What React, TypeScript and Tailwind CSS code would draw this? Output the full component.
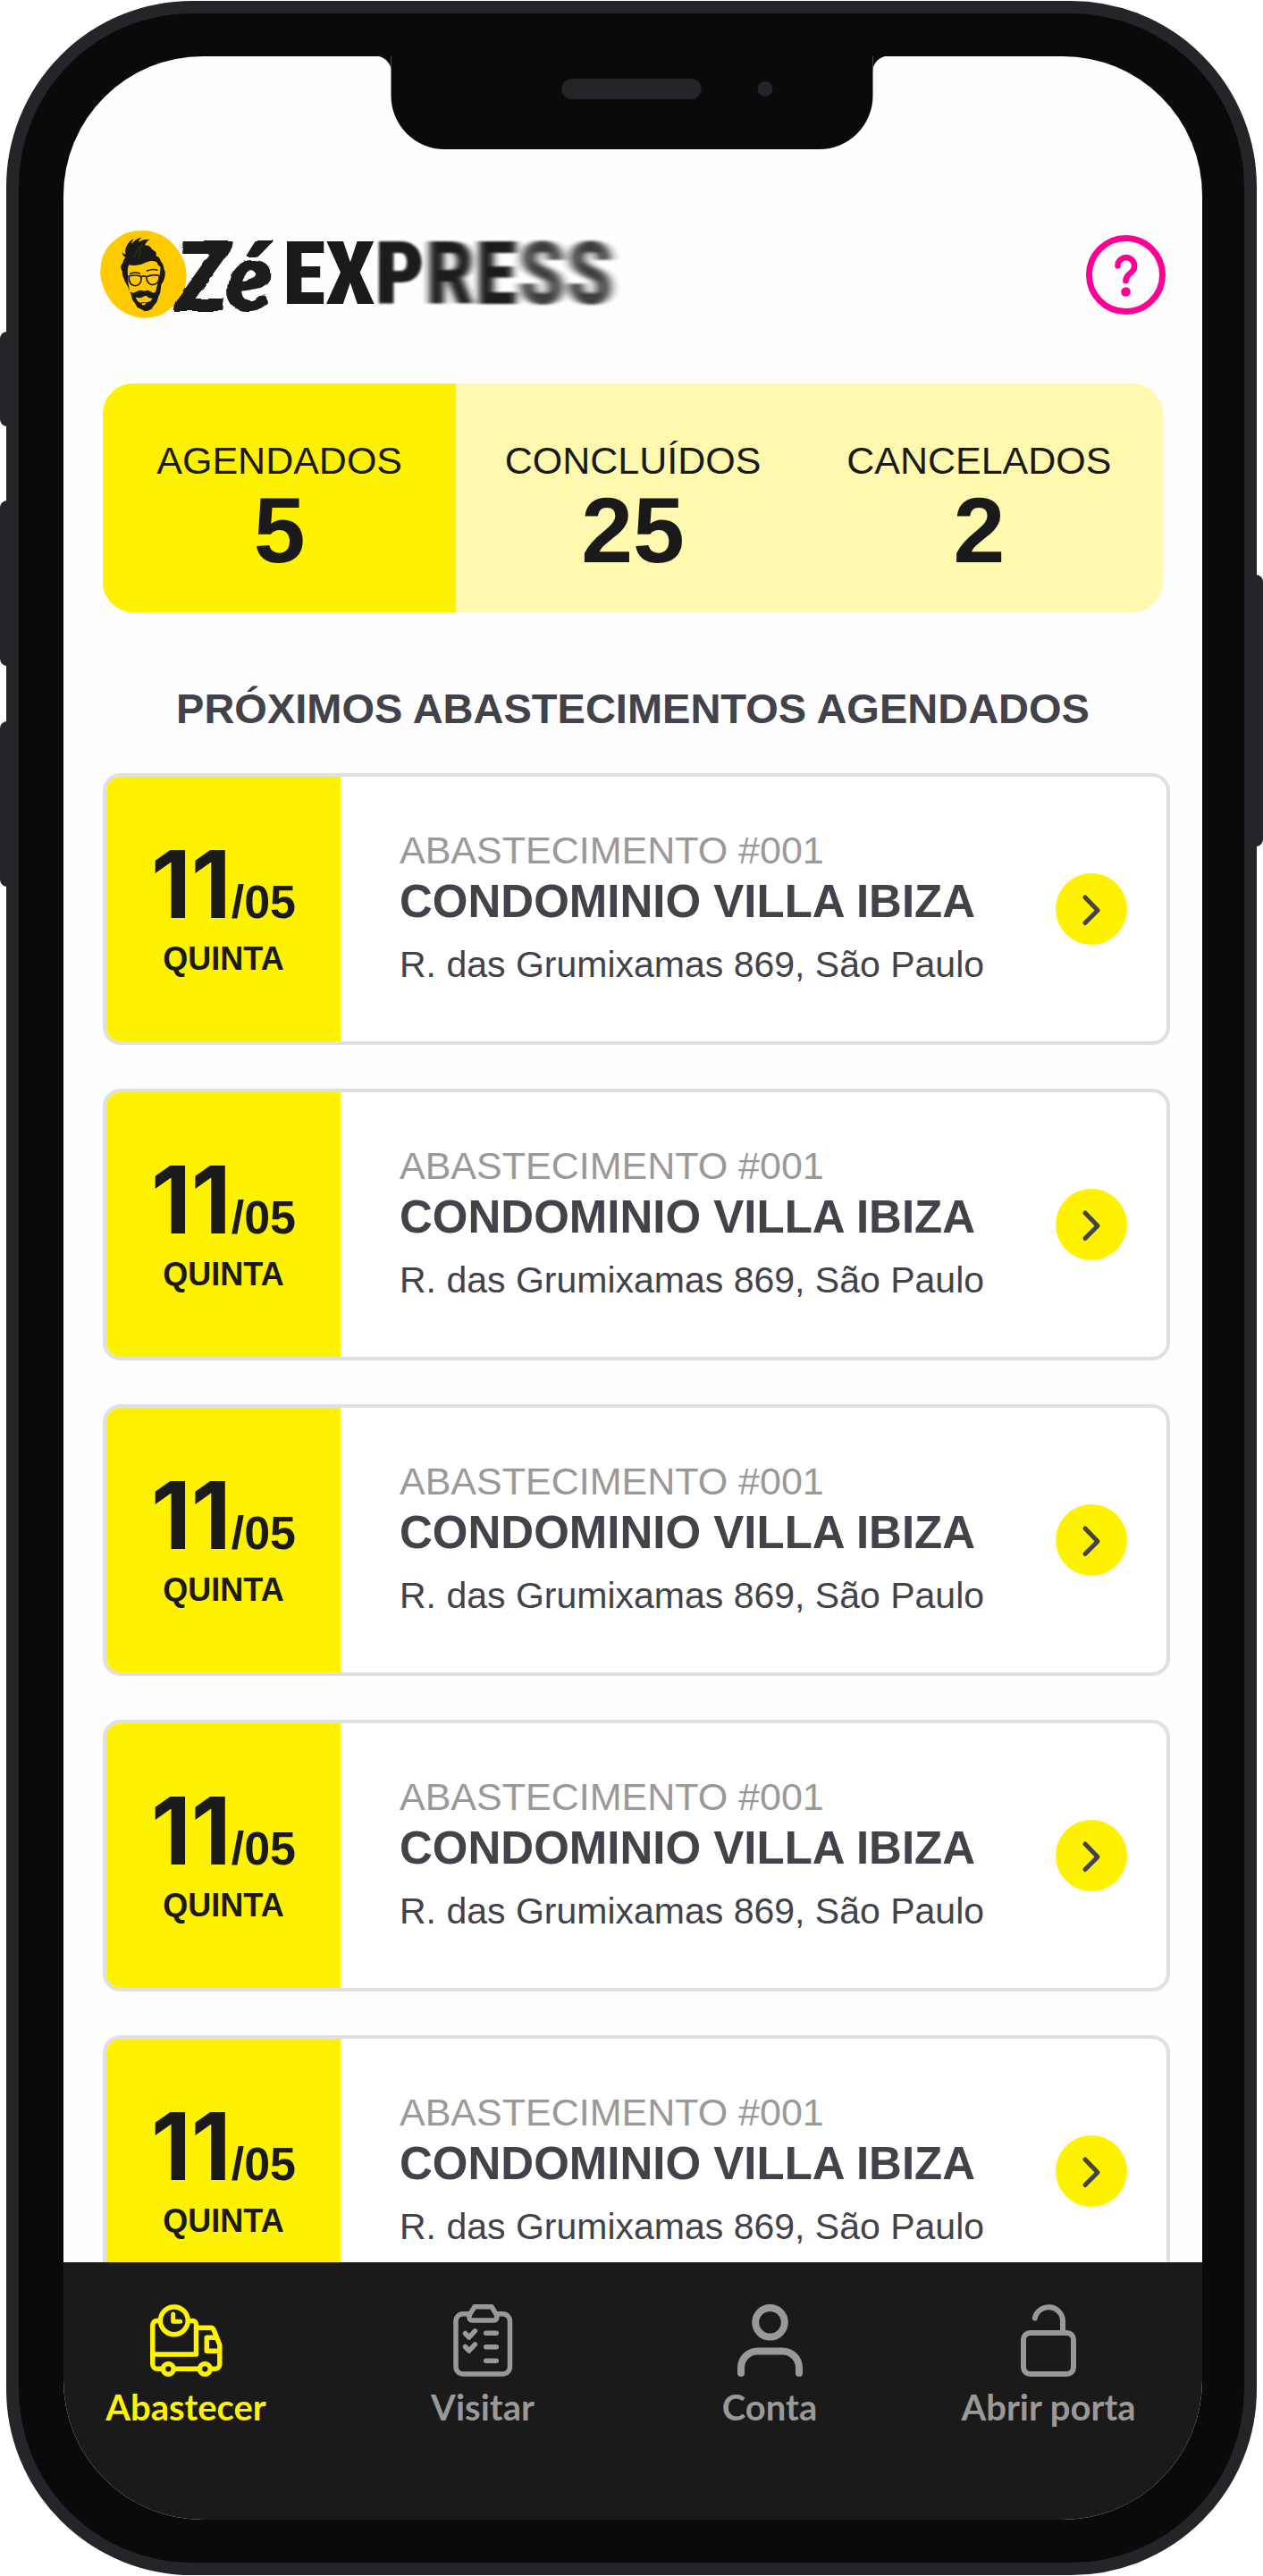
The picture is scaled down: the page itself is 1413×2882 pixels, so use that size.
import type { ReactNode } from "react";

const sans = "font-['Liberation_Sans',Arial,sans-serif]";

function MotionFilters() {
  return (
    <svg width="0" height="0" className="absolute" aria-hidden="true">
      <defs>
        <filter id="motion-1" x="-20%" width="140%" y="-10%" height="120%">
          <feGaussianBlur stdDeviation="1.6 1" />
        </filter>
        <filter id="motion-2" x="-20%" width="140%" y="-10%" height="120%">
          <feGaussianBlur stdDeviation="4 1" />
        </filter>
        <filter id="motion-3" x="-30%" width="160%" y="-10%" height="120%">
          <feGaussianBlur stdDeviation="6 1" />
        </filter>
        <filter id="brush" x="-10%" width="120%" y="-10%" height="120%">
          <feMorphology in="SourceGraphic" operator="dilate" radius="1" result="bold" />
          <feTurbulence type="fractalNoise" baseFrequency="0.04" numOctaves="2" seed="4" result="n" />
          <feDisplacementMap in="bold" in2="n" scale="6" xChannelSelector="R" yChannelSelector="G" />
        </filter>
      </defs>
    </svg>
  );
}

function Face() {
  return (
    <svg viewBox="21 27 290 294" className="h-[98px] w-[97px] shrink-0" aria-hidden="true">
      <path
        fill="#ffcb00"
        d="M166 27c22 0 38 5 52 12 24 8 38 24 52 38 14 16 24 34 32 52 6 18 9 36 8 56-1 16-4 34-12 50-8 20-22 34-34 48-16 14-28 22-46 30-16 4-34 8-56 7-20-2-40-8-58-17-20-10-34-22-46-38-14-18-22-36-28-52-4-14-9-26-9-42 2-20 1-38 8-56 8-20 18-38 34-50 12-12 26-22 44-30 18-6 36-8 59-8z"
      />
      <path
        fill="#1a1a1a"
        fillRule="evenodd"
        d="M112 212c-5-8-9-14-11-22-5-10-7-18-6-27-4-6-6-12-4-20l5-7c2-10 6-16 10-20-7-2-10-9-12-18 5 6 8 8 12 8-2-14 0-24 6-32 6-9 10-14 22-20-7 10-8 14-8 18 9-10 14-18 34-22-8 6-9 10-10 16 8-6 14-8 26-9l12-1c-9 5-15 12-17 20 12 0 20 6 24 14l12 8c2 6 2 10 1 14 8 2 14 8 16 18 6 6 10 14 11 26 4 8 5 14 3 22-2 8-2 14-5 18-3 6-4 8-7 12l-3 20c0 8-2 12-6 18l-6 20-10 12-8 12-12 6-10 2-14-8-12-6-8-14c-8-8-10-16-12-28z
        M118 142c-6 8-5 18-5 28l2 32 5 30 12 4 14-6c8-4 14-3 22 0 8-4 14-4 20 0l12 6 6-3 6-22 6-16 3-24 2-22c-6-4-10-8-12-16-16-8-32-2-48 6-16 5-30 6-45 3z
        M140 250c8 4 16 4 26-2 8-3 12-2 16 3 5 3 10 4 14 3-3 6-6 10-14 12l-12 4c-14 2-22-4-26-10z
        M158 268h16l-3 9h-10z"
      />
      <g fill="none" stroke="#1a1a1a" strokeLinecap="round">
        <path strokeWidth="5" d="M122 172c12-6 22-5 32-1M178 162c12-5 22-6 34-3" />
        <path strokeWidth="5" d="M117 180c14-4 28-4 40 1 4 10 0 22-8 28-8 5-20 3-26-4-5-8-7-16-6-25zM176 182c14-6 28-8 42-4 2 8 0 18-6 25-8 6-18 8-26 2-7-6-10-14-10-23zM158 183c6-4 12-4 18-1" />
        <path strokeWidth="4" d="M134 120c4-16 10-30 30-44M150 118c6-10 6-24 0-36" stroke="#4a3d10" opacity=".5" />
      </g>
    </svg>
  );
}

function Logo() {
  return (
    <div className="flex h-[98px] items-center" aria-label="Zé Express">
      <Face />
      <span className="-ml-3 font-[Lato] text-[104px] leading-[98px] font-black text-[#1a1a1a] italic [filter:url(#brush)]">Zé</span>
      <span className="ml-3 flex font-['Roboto_Condensed',Roboto,sans-serif] text-[98px] leading-[98px] font-black text-[#1a1a1a]">
        <span>EX</span>
        <span className="[filter:url(#motion-1)]">P</span>
        <span className="[filter:url(#motion-2)]">RE</span>
        <span className="opacity-85 [filter:url(#motion-3)]">SS</span>
      </span>
    </div>
  );
}

function Stat({ label, value, className }: { label: string; value: string; className: string }) {
  return (
    <button type="button" className={`flex h-64 flex-col items-center gap-1.5 pt-[62px] text-[#1a1a1a] ${className}`}>
      <span className="text-[43px] leading-[48px]">{label}</span>
      <span className="text-[104px] leading-[96px] font-bold">{value}</span>
    </button>
  );
}

function DeliveryCard() {
  return (
    <li className="flex h-[304px] shrink-0 overflow-hidden rounded-[20px] border-4 border-[#e0e0e0] bg-white">
      <div className="flex w-[262px] shrink-0 flex-col items-center bg-[#fff200] pt-20 text-[#1a1a1a]">
        <p className="flex items-baseline leading-[80px] font-bold">
          <span className="font-[Inter] text-[104px]">11</span>
          <span className="text-[52px]">/05</span>
        </p>
        <p className="mt-1 text-[36px] leading-10 font-bold">QUINTA</p>
      </div>
      <div className="flex flex-1 items-center pr-11">
        <div className="flex-1 self-start pt-[58px] pl-[66px] whitespace-nowrap text-[#42424a]">
          <p className="text-[43px] leading-[48px] text-[#999999]">ABASTECIMENTO #001</p>
          <h3 className="mt-1 text-[51px] leading-[60px] font-bold">CONDOMINIO VILLA IBIZA</h3>
          <p className="mt-4 text-[41px] leading-[48px]">R. das Grumixamas 869, São Paulo</p>
        </div>
        <button type="button" aria-label="Abrir abastecimento" className="flex size-20 items-center justify-center rounded-full bg-[#fff200]">
          <svg width="80" height="80" viewBox="0 0 80 80" fill="none" stroke="#42424a" strokeWidth="5" strokeLinecap="round" strokeLinejoin="round">
            <path d="M33 27l14 14.500-14 14" />
          </svg>
        </button>
      </div>
    </li>
  );
}

function TruckIcon() {
  return (
    <svg width="81" height="81" viewBox="0 0 81 81" fill="none" stroke="currentColor" strokeWidth="5.500" strokeLinecap="round" strokeLinejoin="round">
      <circle cx="26.800" cy="18.300" r="15.400" />
      <path d="M25.700 11v8.200h8" strokeWidth="5" />
      <path d="M11 18.500H7.500a4.700 4.700 0 0 0-4.700 4.700V67a5.300 5.300 0 0 0 5.300 5.300h5.500M43 18.500h4.500a4 4 0 0 1 4 4V56H3M27 72.300h27M68 72.300h4.500a5.300 5.300 0 0 0 5.300-5.300V45.500l-6.500-16.500a4 4 0 0 0-4-2.800H53M73 37.300h-9.700v14.900H77" />
      <circle cx="20.300" cy="72.300" r="5.900" />
      <circle cx="61.300" cy="72.300" r="5.900" />
    </svg>
  );
}

function ClipboardIcon() {
  return (
    <svg width="67" height="81" viewBox="0 0 67 81" fill="none" stroke="currentColor" strokeWidth="5.500" strokeLinecap="round" strokeLinejoin="round">
      <path d="M17 10.800h-6a8 8 0 0 0-8 8V70a8 8 0 0 0 8 8h44.500a8 8 0 0 0 8-8V18.800a8 8 0 0 0-8-8h-6" />
      <path d="M24 2.800h19l5.800 9.500V15a3 3 0 0 1-3 3H21a3 3 0 0 1-3-3v-2.700z" />
      <path d="M13.500 32.500l4.300 4.500 6.600-7.200M13.500 47.500l4.300 4.500 6.600-7.200M36.700 32.300h11.600M36.700 47.700h11.600M36.700 63.300h11.600" />
    </svg>
  );
}

function PersonIcon() {
  return (
    <svg width="73" height="81" viewBox="0 0 73 81" fill="none" stroke="currentColor" strokeWidth="8" strokeLinecap="round">
      <circle cx="36.500" cy="20.300" r="16.300" />
      <path d="M4 77v-6a18.500 18.500 0 0 1 18.500-18.500h28A18.500 18.500 0 0 1 69 71v6" />
    </svg>
  );
}

function LockIcon() {
  return (
    <svg width="62" height="81" viewBox="0 0 62 81" fill="none" stroke="currentColor" strokeWidth="6" strokeLinecap="round" strokeLinejoin="round">
      <rect x="3" y="32" width="56" height="46" rx="7.500" />
      <path d="M47 31V18.500A15.800 15.800 0 0 0 15.800 15.500" />
    </svg>
  );
}

function NavItem({ icon, label, className }: { icon: ReactNode; label: string; className: string }) {
  return (
    <a href="#" className={`flex flex-col items-center gap-2.5 ${className}`}>
      {icon}
      <span className="text-[40px] leading-[48px] font-bold whitespace-nowrap">{label}</span>
    </a>
  );
}

export default function App() {
  return (
    <div className={`relative h-screen bg-white px-[7px] py-px ${sans}`}>
      <MotionFilters />
      <div className="absolute top-[371px] left-0 h-[106px] w-4 rounded-l-lg bg-[#262428]" />
      <div className="absolute top-[560px] left-0 h-[185px] w-4 rounded-l-lg bg-[#262428]" />
      <div className="absolute top-[807px] left-0 h-[185px] w-4 rounded-l-lg bg-[#262428]" />
      <div className="absolute top-[643px] right-0 h-[304px] w-4 rounded-r-lg bg-[#262428]" />

      <div className="relative h-full rounded-[208px] border-[14px] border-[#262428] bg-[#0a0a0a] py-12 pr-[47px] pl-[50px]">
        <div className="flex h-full flex-col overflow-hidden rounded-[156px] bg-[#fefefe]">
          <div className="flex min-h-0 flex-1 flex-col overflow-hidden pt-[195px]">
            <header className="flex shrink-0 items-center justify-between px-[41px]">
              <Logo />
              <button type="button" aria-label="Ajuda">
                <svg width="89" height="89" viewBox="0 0 89 89" fill="none" stroke="#ff0095" strokeLinecap="round">
                  <circle cx="44.500" cy="44.500" r="41" strokeWidth="7" />
                  <path d="M35.500 34.500a9.300 9.300 0 1 1 15.400 7c-3.500 3-6.400 5-6.400 9.700" strokeWidth="6.600" strokeLinejoin="round" />
                  <circle cx="44.500" cy="63.500" r="5.300" fill="#ff0095" stroke="none" />
                </svg>
              </button>
            </header>

            <section className="mx-11 mt-[73px] grid shrink-0 grid-cols-3 overflow-hidden rounded-[34px] bg-[#fef9ae]">
              <Stat label="AGENDADOS" value="5" className="bg-[#fff200]" />
              <Stat label="CONCLUÍDOS" value="25" className="" />
              <Stat label="CANCELADOS" value="2" className="pr-4" />
            </section>

            <h2 className="mt-20 shrink-0 text-center text-[47px] leading-[56px] font-bold whitespace-nowrap text-[#42424a]">
              PRÓXIMOS ABASTECIMENTOS AGENDADOS
            </h2>

            <ul className="mt-11 mr-9 ml-11 flex flex-col gap-[49px]">
              <DeliveryCard />
              <DeliveryCard />
              <DeliveryCard />
              <DeliveryCard />
              <DeliveryCard />
            </ul>
          </div>

          <nav className="flex h-72 shrink-0 justify-between bg-[#1a1a1a] pt-[47px] pr-[71px] pl-[27px] font-[Lato] text-[#999999]">
            <NavItem icon={<TruckIcon />} label="Abastecer" className="w-[220px] text-[#fff200]" />
            <NavItem icon={<ClipboardIcon />} label="Visitar" className="w-[220px]" />
            <NavItem icon={<PersonIcon />} label="Conta" className="w-[198px]" />
            <NavItem icon={<LockIcon />} label="Abrir porta" className="w-[202px]" />
          </nav>
        </div>

        <div className="absolute top-10 left-1/2 flex h-28 w-[539px] -translate-x-1/2 justify-center rounded-b-[60px] bg-[#0a0a0a] before:absolute before:top-2 before:-left-[18px] before:size-[18px] before:bg-[radial-gradient(circle_at_0_100%,transparent_18px,#0a0a0a_19px)] after:absolute after:top-2 after:-right-[18px] after:size-[18px] after:bg-[radial-gradient(circle_at_100%_100%,transparent_18px,#0a0a0a_19px)]">
          <div className="mt-[33px] h-[23px] w-[156px] rounded-full bg-[#262428]" />
          <div className="absolute top-9 right-28 size-[17px] rounded-full bg-[#262428]" />
        </div>
      </div>
    </div>
  );
}
